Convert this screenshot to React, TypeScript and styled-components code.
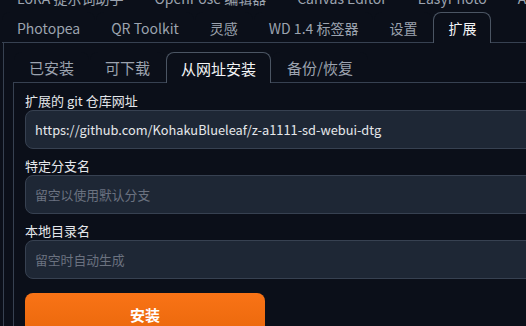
import React from "react";
import styled, { createGlobalStyle } from "styled-components";

const Global = createGlobalStyle`
  html, body { margin: 0; padding: 0; background: #0b0f19; overflow: hidden; }
  body { font-family: "Noto Sans CJK SC", "Noto Sans", sans-serif; }
`;

const Page = styled.div`
  width: 780px;
  margin-top: -18px;
  padding-left: 2px;
`;

const TabNav = styled.div`
  display: flex;
  flex-direction: column;
  border-bottom: 1px solid #374151;
`;

const TabRow = styled.div`
  display: flex;
  gap: 1px;
  height: 30px;
  align-items: flex-end;
`;

const Tab = styled.div<{ $active?: boolean; $size?: number }>`
  box-sizing: border-box;
  padding: 0 14px;
  display: flex;
  align-items: center;
  font-size: ${(p) => p.$size ?? 14}px;
  white-space: nowrap;
  color: ${(p) => (p.$active ? "#f3f4f6" : "#9ca3af")};
  border: 1px solid ${(p) => (p.$active ? "#4b5563" : "transparent")};
  border-bottom: none;
  border-radius: 8px 8px 0 0;
  background: #0b0f19;
  margin-bottom: ${(p) => (p.$active ? "-1px" : "0")};
  height: ${(p) => (p.$active ? "31px" : "30px")};
`;

const Panel = styled.div`
  border-left: 1px solid #374151;
  margin-left: 1px;
  padding: 8px 0 0 9px;
`;

const SubNav = styled.div`
  display: flex;
  gap: 1px;
  height: 31px;
  align-items: flex-end;
  border-bottom: 1px solid #374151;
  padding-left: 1px;
`;

const SubPanel = styled.div`
  border-left: 1px solid #374151;
  padding: 9px 0 0 11px;
  display: flex;
  flex-direction: column;
`;

const Label = styled.div`
  font-size: 13px;
  line-height: 18px;
  color: #e5e7eb;
`;

const Input = styled.div<{ $placeholder?: boolean }>`
  box-sizing: border-box;
  height: 39px;
  margin-bottom: 8px;
  border: 1px solid #374151;
  border-radius: 8px;
  background: #1e2735;
  padding: 0 9px;
  display: flex;
  align-items: center;
  font-size: 12.8px;
  color: ${(p) => (p.$placeholder ? "#6b7280" : "#e5e7eb")};
  white-space: nowrap;
`;

const Button = styled.button`
  margin-top: 6px;
  width: 240px;
  height: 42px;
  border: none;
  border-radius: 8px;
  background: linear-gradient(to bottom, #f97316, #ea680c);
  color: #ffffff;
  font-family: "Noto Sans CJK SC", sans-serif;
  font-size: 15px;
  font-weight: 700;
  display: flex;
  align-items: center;
  justify-content: center;
  padding: 0;
`;

const row1 = ["LoRA 提示词助手", "OpenPose 编辑器", "Canvas Editor", "EasyPhoto", "Ai"];
const row2 = ["Photopea", "QR Toolkit", "灵感", "WD 1.4 标签器", "设置", "扩展"];
const subTabs = ["已安装", "可下载", "从网址安装", "备份/恢复"];

export default function App() {
  return (
    <>
      <Global />
      <Page>
        <TabNav>
          <TabRow>
            {row1.map((t) => (
              <Tab key={t}>{t}</Tab>
            ))}
          </TabRow>
          <TabRow>
            {row2.map((t) => (
              <Tab key={t} $active={t === "扩展"}>{t}</Tab>
            ))}
          </TabRow>
        </TabNav>
        <Panel>
          <SubNav>
            {subTabs.map((t) => (
              <Tab key={t} $size={15} $active={t === "从网址安装"}>{t}</Tab>
            ))}
          </SubNav>
          <SubPanel>
            <Label>扩展的 git 仓库网址</Label>
            <Input>https://github.com/KohakuBlueleaf/z-a1111-sd-webui-dtg</Input>
            <Label>特定分支名</Label>
            <Input $placeholder>留空以使用默认分支</Input>
            <Label>本地目录名</Label>
            <Input $placeholder>留空时自动生成</Input>
            <Button>安装</Button>
          </SubPanel>
        </Panel>
      </Page>
    </>
  );
}
